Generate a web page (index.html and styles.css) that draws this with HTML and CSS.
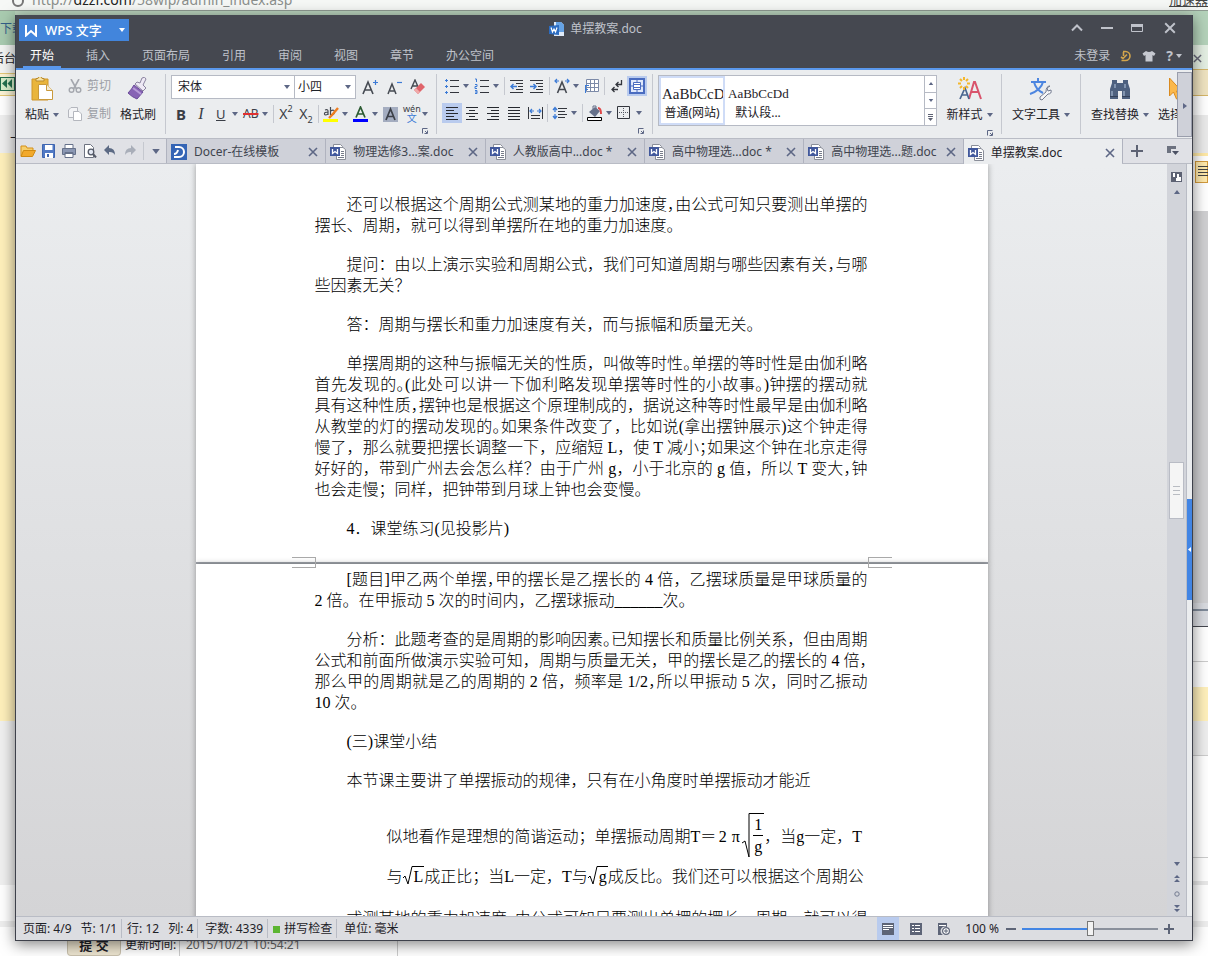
FILE: index.html
```html
<!DOCTYPE html>
<html lang="zh-CN">
<head>
  <meta charset="UTF-8">
  <title>单摆教案.doc</title>
  <link rel="stylesheet" href="styles.css">
</head>
<body>
  <svg class="defs" aria-hidden="true">
    <symbol id="caret" viewBox="0 0 6 4"><path d="M0 0h6L3 4z" fill="currentColor"/></symbol>
    <symbol id="close" viewBox="0 0 10 10"><path d="M1 1l8 8M9 1l-8 8" stroke="currentColor" stroke-width="1.6" fill="none"/></symbol>
    <symbol id="launch" viewBox="0 0 6 6"><path d="M.5 5.500V.5h5M2.500 5.500h3v-3M3 3l2 2" stroke="currentColor" fill="none"/></symbol>
    <symbol id="word" viewBox="0 0 16 16">
      <path d="M3.500.5h7l2 2v9h-9z" fill="#fff" stroke="#8a8e99"/>
      <path d="M8 3.500h5l2.500 2v10H6.500v-4" fill="#fff" stroke="#8a8e99"/>
      <path d="M11 7.500h3M11 9.500h3M11 11.500h3M8 13.500h6" stroke="#777c8a"/>
      <path d="M0 3h10v9H0z" fill="#41589c"/>
      <path d="M2.500 5v4.500L5 7.500l2.500 2V5" fill="none" stroke="#fff" stroke-width="1.300"/>
    </symbol>
  </svg>

  <!-- browser page behind the window -->
  <div class="desktop">
    <div class="address"><span class="globe"></span><span>http://<b>dzzf.com</b>/58wlp/admin_index.asp</span><a href="#" class="speed">加速器</a></div>
    <div class="sides">
      <div class="side-left">
        <a href="#" class="side-link">下载</a>
        <span class="side-name">后台</span>
        <span class="side-rewind"><svg width="12" height="11" viewBox="0 0 12 11"><path d="M6 1v9L1 5.500zM11 1v9L6.500 5.500z" fill="#23704e"/></svg></span>
        <span class="side-up">上</span>
      </div>
      <div class="side-right">
        <svg class="side-close" width="9" height="9"><use href="#close"/></svg>
        <span class="side-align"><svg width="12" height="12" viewBox="0 0 12 12"><path d="M0 1.500h12M0 4.500h12M0 7.500h12M0 10.500h12" stroke="#444"/></svg></span>
      </div>
    </div>
    <div class="form-foot">
      <button class="submit">提 交</button>
      <span class="foot-label">更新时间:</span>
      <span class="foot-time">2015/10/21 10:54:21</span>
    </div>
  </div>

  <div class="window">
    <header class="head">
      <div class="title-row">
        <button class="brand">
          <svg width="12" height="13" viewBox="0 0 12 13"><path d="M1 1v10.500L6 7l5 4.500V1" fill="none" stroke="#fff" stroke-width="2"/></svg>
          <span>WPS 文字</span>
          <svg width="6" height="4"><use href="#caret"/></svg>
        </button>
        <div class="title">
          <svg width="16" height="16" viewBox="0 0 16 16"><path d="M5 1h7l3 3v11H5z" fill="#dfeaf8"/><path d="M7 1h5l3 3v7H7z" fill="#65a2e4"/><path d="M0 5l10-1v10L0 13z" fill="#2c6cc0"/><path d="M2 6.500L3.500 11 5 8l1.500 3L8 6.500" fill="none" stroke="#fff" stroke-width="1.200"/></svg>
          <span>单摆教案.doc</span>
        </div>
        <div class="win-controls">
          <button aria-label="收起"><svg width="12" height="12" viewBox="0 0 12 12"><path d="M1 8.500L6 3.500l5 5" fill="none" stroke="currentColor" stroke-width="2"/></svg></button>
          <button aria-label="最小化"><svg width="12" height="12" viewBox="0 0 12 12"><path d="M0 6h12" stroke="currentColor" stroke-width="2"/></svg></button>
          <button aria-label="最大化"><svg width="12" height="12" viewBox="0 0 12 12"><path d="M.5 2.500h11v7H.5z" fill="none" stroke="currentColor"/><path d="M0 3.500h12" stroke="currentColor" stroke-width="3"/></svg></button>
          <button aria-label="关闭" class="last"><svg width="12" height="12"><use href="#close"/></svg></button>
        </div>
      </div>
      <nav class="menu">
        <button class="on">开始</button>
        <button>插入</button>
        <button>页面布局</button>
        <button>引用</button>
        <button>审阅</button>
        <button>视图</button>
        <button>章节</button>
        <button>办公空间</button>
        <div class="account">
          <a href="#">未登录</a>
          <svg width="12" height="12" viewBox="0 0 12 12"><path d="M3 1.500h2.500a4.500 4.500 0 0 1 0 9H1.500M3.500 2v4M7 4.500L3 8.500 1 7" fill="none" stroke="#d3a54c" stroke-width="1.600"/></svg>
          <svg width="14" height="12" viewBox="0 0 14 12"><path d="M4 1q3 2 6 0l3.500 2.500L12 6l-1.500-1v6.500h-7V5L2 6 .5 3.500z" fill="#c6c9d1"/></svg>
          <button class="help" aria-label="帮助">?<svg width="6" height="4"><use href="#caret"/></svg></button>
        </div>
      </nav>
    </header>

    <div class="ribbon">
      <section class="group clip">
        <button class="big">
          <svg width="24" height="24" viewBox="0 0 24 24"><path d="M2 2h16v21H2z" fill="#e9b53c" stroke="#cf962b"/><path d="M6 4V1.500h2a2 2 0 0 1 4 0h2V4z" fill="#f7e4a8" stroke="#b98b2c"/><path d="M8.500 7.500h8l6 6v9h-14z" fill="#fff" stroke="#c99a3c"/><path d="M16.500 7.500v6h6" fill="#f5ecd4" stroke="#c99a3c"/></svg>
          <span>粘贴 <svg width="6" height="4"><use href="#caret"/></svg></span>
        </button>
        <div class="stack">
          <button class="wide off"><svg width="14" height="14" viewBox="0 0 14 14"><path d="M3 0l5.500 10M11 0L5.500 10" stroke="#a4a7ae" stroke-width="1.600"/><circle cx="3.500" cy="11" r="2.300" fill="none" stroke="#a4a7ae" stroke-width="1.400"/><circle cx="10.500" cy="11" r="2.300" fill="none" stroke="#a4a7ae" stroke-width="1.400"/></svg>剪切</button>
          <button class="wide off"><svg width="14" height="14" viewBox="0 0 14 14"><path d="M3 .5h6.500v10h-9V3z" fill="#f3f4f6" stroke="#b4b7be"/><path d="M7 4.500h4l2.500 2.500v6.500H5.500V4.500z" fill="#fff" stroke="#b4b7be"/></svg>复制</button>
        </div>
        <button class="big">
          <svg width="24" height="24" viewBox="0 0 24 24"><path d="M16 1q3-2 4 1l-3 6 3 3-3 3-8-7 2-2 3 1z" fill="#eee9f5" stroke="#8b84a0"/><path d="M8 8l9 7-6 7Q6 20 2 16q4-4 6-8z" fill="#8763b5" stroke="#6b4c99"/><path d="M7 11l8 6" stroke="#b79bd8" stroke-width="2"/></svg>
          <span>格式刷</span>
        </button>
      </section>

      <section class="group">
        <div class="tools">
          <span class="pick font"><select aria-label="字体"><option>宋体</option></select><svg width="6" height="4"><use href="#caret"/></svg></span>
          <span class="pick size"><select aria-label="字号"><option>小四</option></select><svg width="6" height="4"><use href="#caret"/></svg></span>
          <button class="tool spaced" aria-label="增大字号"><svg width="17" height="16" viewBox="0 0 17 16"><path d="M1 15L6 3l5 12M3 11h6" fill="none" stroke="#454a52" stroke-width="1.600"/><path d="M13.500 1v5M11 3.500h5" stroke="#3c7bd6" stroke-width="1.200"/></svg></button>
          <button class="tool spaced" aria-label="减小字号"><svg width="17" height="16" viewBox="0 0 17 16"><path d="M2 15L6 5l4 10M4 12h5" fill="none" stroke="#454a52" stroke-width="1.500"/><path d="M11 3.500h5" stroke="#3c7bd6" stroke-width="1.200"/></svg></button>
          <button class="tool spaced" aria-label="清除格式"><svg width="16" height="16" viewBox="0 0 16 16"><path d="M1 10l4-9 4 9M2.500 7h5" fill="none" stroke="#454a52" stroke-width="1.400"/><path d="M11 4l4 4-7 7-4-4z" fill="#e0646b"/><path d="M4 11l2-2 4 4-2 2z" fill="#f0a9a9"/></svg></button>
        </div>
        <div class="tools">
          <button class="tool bold">B</button>
          <button class="tool italic">I</button>
          <button class="tool drop under"><span>U</span><svg class="caret" width="6" height="4"><use href="#caret"/></svg></button>
          <button class="tool drop strike"><span>AB</span><svg class="caret" width="6" height="4"><use href="#caret"/></svg></button>
          <i class="bar"></i>
          <button class="tool script">X<sup>2</sup></button>
          <button class="tool script">X<sub>2</sub></button>
          <i class="bar"></i>
          <button class="tool drop" aria-label="突出显示"><svg width="16" height="16" viewBox="0 0 16 16"><path d="M0 13h15v3H0z" fill="#ff0"/><path d="M2 4q3-1 3 1v4M5 6Q1 6 1.500 8T5 8M7.500 1v8M7.500 5q4-2 4 1t-4 2.500" fill="none" stroke="#454a52" stroke-width="1.200"/><path d="M15 2L9 9l-3 3" stroke="#ef7d1f" stroke-width="2.400"/></svg><svg class="caret" width="6" height="4"><use href="#caret"/></svg></button>
          <button class="tool drop" aria-label="字体颜色"><svg width="16" height="16" viewBox="0 0 16 16"><path d="M0 13h15v3H0z" fill="#00f"/><path d="M3 11.500L7.500 1 12 11.500M4.500 8h6" fill="none" stroke="#2d5c34" stroke-width="1.700"/></svg><svg class="caret" width="6" height="4"><use href="#caret"/></svg></button>
          <button class="tool" aria-label="底纹"><svg width="16" height="16" viewBox="0 0 16 16"><path d="M0 1h15v15H0z" fill="#a4adc0"/><path d="M3 14L7.500 3 12 14M4.500 10.500h6" fill="none" stroke="#3c4048" stroke-width="1.700"/></svg></button>
          <button class="tool drop pinyin"><span>wén<b>文</b></span><svg class="caret" width="6" height="4"><use href="#caret"/></svg></button>
        </div>
        <button class="launch" aria-label="字体设置"><svg width="6" height="6"><use href="#launch"/></svg></button>
      </section>

      <section class="group">
        <div class="tools">
          <button class="tool drop" aria-label="项目符号"><svg width="16" height="16" viewBox="0 0 16 16"><path d="M6 2.500h9M6 8.500h9M6 14.500h9" stroke="#33363d" stroke-width="1.200"/><path d="M1 2.500h3M1 8.500h3M1 14.500h3M2.500 1v3M2.500 7v3M2.500 13v3" stroke="#3c7bd6" stroke-width="1"/></svg><svg class="caret" width="6" height="4"><use href="#caret"/></svg></button>
          <button class="tool drop" aria-label="编号"><svg width="16" height="16" viewBox="0 0 16 16"><path d="M6 2.500h9M6 8.500h9M6 14.500h9" stroke="#33363d" stroke-width="1.200"/><path d="M1 1h1.500v3M1 6.500h2v2H1v2h2M1 12.500h2v3H1M1 14h2" stroke="#3c7bd6" fill="none"/></svg><svg class="caret" width="6" height="4"><use href="#caret"/></svg></button>
          <i class="bar"></i>
          <button class="tool" aria-label="减少缩进"><svg width="14" height="14" viewBox="0 0 14 14"><path d="M0 1.500h13M6 4.500h7M8 7.500h5M6 10.500h7M0 13.500h13" stroke="#33363d"/><path d="M7 7.500H1M3.500 5L1 7.500 3.500 10" stroke="#3c7bd6" stroke-width="1.500" fill="none"/></svg></button>
          <button class="tool" aria-label="增加缩进"><svg width="14" height="14" viewBox="0 0 14 14"><path d="M0 1.500h13M6 4.500h7M8 7.500h5M6 10.500h7M0 13.500h13" stroke="#33363d"/><path d="M0 7.500h6M3.500 5L6 7.500 3.500 10" stroke="#3c7bd6" stroke-width="1.500" fill="none"/></svg></button>
          <i class="bar"></i>
          <button class="tool drop" aria-label="中文版式"><svg width="16" height="16" viewBox="0 0 16 16"><path d="M3.500 15L8 4l4.500 11M5 11.500h6" fill="none" stroke="#454a52" stroke-width="1.600"/><path d="M1 3h4M3 1L1 3l2 2M11 3h4M13 1l2 2-2 2" stroke="#3c7bd6" stroke-width="1.200" fill="none"/></svg><svg class="caret" width="6" height="4"><use href="#caret"/></svg></button>
          <button class="tool" aria-label="表格"><svg width="16" height="16" viewBox="0 0 16 16"><path d="M2.500 1.500h12v12h-12zM2.500 5.500h12M2.500 9.500h12M6.500 1.500v12M10.500 1.500v12" fill="#fff" stroke="#7c8aa8"/><path d="M1 7.500h4M1.500 7v8M1 11.500h3" stroke="#3c7bd6" fill="none"/></svg></button>
          <i class="bar"></i>
          <button class="tool" aria-label="换行"><svg width="12" height="14" viewBox="0 0 12 14"><path d="M10.500 1v4.500H5M7.500 3L5 5.500 7.500 8M7 10.500H1M3.500 8L1 10.500 3.500 13" fill="none" stroke="#33363d" stroke-width="1.300"/></svg></button>
          <button class="tool on" aria-label="页面显示"><svg width="16" height="16" viewBox="0 0 16 16"><path d="M1 1h14v14H1z" fill="#dfe8fb" stroke="#4a6cc0" stroke-width="2"/><path d="M4.500 4.500h7v7h-7zM4 6.500h8M4 9.500h8" fill="#fff" stroke="#4a6cc0"/><path d="M8 2v2M8 12v2M2 8h2M12 8h2" stroke="#4a6cc0"/></svg></button>
        </div>
        <div class="tools">
          <button class="tool on" aria-label="左对齐"><svg width="12" height="13" viewBox="0 0 12 13"><path d="M0 .5h12M0 3.500h8M0 6.500h12M0 9.500h8M0 12.500h12" stroke="#26292f"/></svg></button>
          <button class="tool" aria-label="居中"><svg width="12" height="13" viewBox="0 0 12 13"><path d="M0 .5h12M3 3.500h6M0 6.500h12M3 9.500h6M0 12.500h12" stroke="#26292f"/></svg></button>
          <button class="tool next" aria-label="右对齐"><svg width="12" height="13" viewBox="0 0 12 13"><path d="M0 .5h12M4 3.500h8M0 6.500h12M4 9.500h8M0 12.500h12" stroke="#26292f"/></svg></button>
          <button class="tool next" aria-label="两端对齐"><svg width="12" height="13" viewBox="0 0 12 13"><path d="M0 .5h12M0 3.500h12M0 6.500h12M0 9.500h12M0 12.500h12" stroke="#26292f"/></svg></button>
          <button class="tool next" aria-label="分散对齐"><svg width="15" height="12" viewBox="0 0 15 12"><path d="M.5 0v12M14.500 0v12M3 8.500h9M3 11.500h9" stroke="#33363d"/><path d="M2 4h4M4 2L2 4l2 2M9 4h4M11 2l2 2-2 2" stroke="#3c7bd6" stroke-width="1.200" fill="none"/></svg></button>
          <i class="bar"></i>
          <button class="tool drop" aria-label="行距"><svg width="16" height="14" viewBox="0 0 16 14"><path d="M6 2.500h9M6 5.500h7M6 8.500h9M6 11.500h7" stroke="#33363d"/><path d="M3 2v4M1 4l2-2.500L5 4M3 8v4M1 10l2 2.500L5 10" stroke="#3c7bd6" stroke-width="1.300" fill="none"/></svg><svg class="caret" width="6" height="4"><use href="#caret"/></svg></button>
          <i class="bar"></i>
          <button class="tool drop" aria-label="填充"><svg width="16" height="16" viewBox="0 0 16 16"><path d="M2 7l6-5 5 4-5 6z" fill="#66718a"/><path d="M6 4V1h3v3" fill="none" stroke="#66718a"/><path d="M11 3q3 0 3 6" fill="none" stroke="#e04848" stroke-width="2"/><path d="M.5 12.500h14v3H.5z" fill="#fff" stroke="#000"/></svg><svg class="caret" width="6" height="4"><use href="#caret"/></svg></button>
          <button class="tool drop" aria-label="边框"><svg width="14" height="14" viewBox="0 0 14 14"><path d="M.5.5h12v12H.5z" fill="none" stroke="#33363d"/><path d="M6.500 2v10M2 6.500h10" stroke="#555a64" stroke-dasharray="1 1"/></svg><svg class="caret" width="6" height="4"><use href="#caret"/></svg></button>
        </div>
        <button class="launch" aria-label="段落设置"><svg width="6" height="6"><use href="#launch"/></svg></button>
      </section>

      <section class="group styles">
        <div class="gallery">
          <button class="style on"><span class="sample big-sample">AaBbCcDd</span><span>普通(网站)</span></button>
          <button class="style"><span class="sample">AaBbCcDd</span><span>默认段...</span></button>
          <div class="steps">
            <button aria-label="上一行"><svg class="flip" width="6" height="3"><use href="#caret"/></svg></button>
            <button aria-label="下一行"><svg width="6" height="3"><use href="#caret"/></svg></button>
            <button aria-label="更多"><svg width="7" height="7" viewBox="0 0 7 7"><path d="M1 .5h5M1 2.500h5" stroke="#5d6273"/><path d="M1 4h5L3.500 7z" fill="#5d6273"/></svg></button>
          </div>
        </div>
      </section>
      <section class="group new-style">
        <button class="big">
          <svg width="24" height="24" viewBox="0 0 24 24"><path d="M11 22L16 5h1l6 17M13 15h8" fill="none" stroke="#d9536c" stroke-width="2"/><path d="M2 22L7 11l4 11M4 18h6" fill="none" stroke="#4a6690" stroke-width="1.700"/><path d="M6 0v3M6 10v3M0 6.500h3M9 6.500h3M2 2l2 2M10 2L8 4M2 11l2-2M10 11L8 9" stroke="#f4b72c" stroke-width="2"/></svg>
          <span>新样式 <svg width="6" height="4"><use href="#caret"/></svg></span>
        </button>
        <button class="launch" aria-label="样式设置"><svg width="6" height="6"><use href="#launch"/></svg></button>
      </section>
      <section class="group tools-group">
        <button class="big">
          <svg width="24" height="24" viewBox="0 0 24 24"><path d="M9 1v4M2 5h15M5 5q2 8 9 11M14 5Q12 13 1 17" fill="none" stroke="#4d86e0" stroke-width="2"/><path d="M21 9l-3 2 1 3 3-1q1 4-3 4l-6 6q-3 0-2-3l6-5q0-6 4-6z" fill="#f5f6f8" stroke="#737b90"/></svg>
          <span>文字工具 <svg width="6" height="4"><use href="#caret"/></svg></span>
        </button>
      </section>
      <section class="group find">
        <button class="big">
          <svg width="24" height="24" viewBox="0 0 24 24"><path d="M4 3h5v3h6V3h5v3l2 6v10h-8v-8h-4v8H2V12l2-6z" fill="#4e617f"/><path d="M4 14v5M16 14v5M7 7v4M17 7v4" stroke="#93a5c0" stroke-width="1.500"/><path d="M2 19.500h8M14 19.500h8" stroke="#33415a"/></svg>
          <span>查找替换 <svg width="6" height="4"><use href="#caret"/></svg></span>
        </button>
        <button class="big choose">
          <svg width="24" height="24" viewBox="0 0 24 24"><path d="M11.500 1v18l4-4 3 7 3-1.500-3-6.500h5z" fill="#fbb84b" stroke="#d98a1f"/></svg>
          <span>选择</span>
        </button>
      </section>
      <button class="ribbon-next" aria-label="更多工具"><svg width="4" height="6" viewBox="0 0 4 6"><path d="M0 0v6l4-3z" fill="#5f6887"/></svg></button>
    </div>

    <div class="tabbar">
      <div class="quick">
        <button aria-label="打开"><svg width="16" height="14" viewBox="0 0 16 14"><path d="M1 12V2h5l1 2h6v3" fill="#f6cf6d" stroke="#d58f18"/><path d="M3.500 6.500h12l-3 6H1z" fill="#f2a92b" stroke="#d08a12"/></svg></button>
        <button aria-label="保存"><svg width="14" height="14" viewBox="0 0 14 14"><path d="M.5.5h12v13H.5z" fill="#5179c4" stroke="#3f65b0"/><path d="M3 1h7.500v5H3zM3 9h8v5H3z" fill="#fff"/><path d="M5 10h2v3H5z" fill="#3f65b0"/></svg></button>
        <button aria-label="打印"><svg width="14" height="14" viewBox="0 0 14 14"><path d="M3 .5h8v4H3zM3 9.500h8v4H3z" fill="#fff" stroke="#66718a"/><path d="M.5 4.500h13v6H11v-2H3v2H.5z" fill="#8b97b3" stroke="#66718a"/></svg></button>
        <button aria-label="打印预览"><svg width="14" height="14" viewBox="0 0 14 14"><path d="M1.500.5h6l3 3v10h-9z" fill="#fff" stroke="#6d7280"/><circle cx="8" cy="8" r="2.800" fill="#e3e8f3" stroke="#555a68" stroke-width="1.300"/><path d="M10 10l3 3.500" stroke="#555a68" stroke-width="2"/></svg></button>
        <button aria-label="撤消"><svg width="12" height="12" viewBox="0 0 12 12"><path d="M5 0v3q6 0 6 7Q9 6.500 5 7v3L0 5z" fill="#5c6a84"/></svg></button>
        <button aria-label="恢复"><svg width="12" height="12" viewBox="0 0 12 12"><path d="M7 0v3q-6 0-6 7 2-3.500 6-3v3l5-5z" fill="#a9aeb9"/></svg></button>
        <i class="bar"></i>
        <button aria-label="自定义"><svg width="8" height="5"><use href="#caret"/></svg></button>
      </div>
      <div class="tabs">
        <div class="tab"><svg width="16" height="16" viewBox="0 0 16 16"><path d="M0 0h16v16H0z" fill="#3565b5"/><path d="M4 3h4a5 5 0 0 1 0 10H3" fill="none" stroke="#fff" stroke-width="2"/><path d="M3 10q3 0 4-4" fill="none" stroke="#fff" stroke-width="2"/></svg><span>Docer-在线模板</span><button aria-label="关闭"><svg width="10" height="10"><use href="#close"/></svg></button></div>
        <div class="tab"><svg width="16" height="16"><use href="#word"/></svg><span>物理选修3...案.doc</span><button aria-label="关闭"><svg width="10" height="10"><use href="#close"/></svg></button></div>
        <div class="tab"><svg width="16" height="16"><use href="#word"/></svg><span>人教版高中...doc *</span><button aria-label="关闭"><svg width="10" height="10"><use href="#close"/></svg></button></div>
        <div class="tab"><svg width="16" height="16"><use href="#word"/></svg><span>高中物理选...doc *</span><button aria-label="关闭"><svg width="10" height="10"><use href="#close"/></svg></button></div>
        <div class="tab"><svg width="16" height="16"><use href="#word"/></svg><span>高中物理选...题.doc</span><button aria-label="关闭"><svg width="10" height="10"><use href="#close"/></svg></button></div>
        <div class="tab on"><svg width="16" height="16"><use href="#word"/></svg><span>单摆教案.doc</span><button aria-label="关闭"><svg width="10" height="10"><use href="#close"/></svg></button></div>
      </div>
      <div class="tab-end">
        <button aria-label="新建"><svg width="12" height="12" viewBox="0 0 12 12"><path d="M6 0v12M0 6h12" stroke="#5d6273" stroke-width="2"/></svg></button>
        <button aria-label="标签列表"><svg width="12" height="10" viewBox="0 0 12 10"><path d="M0 0h9v3H4v4H0z" fill="#6d7280"/><path d="M5 5h7L8.500 9z" fill="#4c5164"/></svg></button>
      </div>
    </div>

    <div class="work">
      <main class="canvas">
        <article class="page first">
          <p><span class="line full indent">还可以根据这个周期公式测某地的重力加速度<span class="half">，</span>由公式可知只要测出单摆的</span><span class="line">摆长、周期，就可以得到单摆所在地的重力加速度。</span></p>
          <p><span class="line full indent">提问：由以上演示实验和周期公式，我们可知道周期与哪些因素有关<span class="half">，</span>与哪</span><span class="line">些因素无关？</span></p>
          <p><span class="line indent">答：周期与摆长和重力加速度有关，而与振幅和质量无关。</span></p>
          <p><span class="line full indent">单摆周期的这种与振幅无关的性质，叫做等时性<span class="half">。</span>单摆的等时性是由伽利略</span><span class="line full">首先发现的<span class="half">。</span>(此处可以讲一下伽利略发现单摆等时性的小故事。)钟摆的摆动就</span><span class="line full">具有这种性质<span class="half">，</span>摆钟也是根据这个原理制成的，据说这种等时性最早是由伽利略</span><span class="line full">从教堂的灯的摆动发现的<span class="half">。</span>如果条件改变了，比如说(拿出摆钟展示)这个钟走得</span><span class="line full">慢了，那么就要把摆长调整一下，应缩短 L，使 T 减小<span class="half">；</span>如果这个钟在北京走得</span><span class="line full">好好的，带到广州去会怎么样？由于广州 g，小于北京的 g 值，所以 T 变大<span class="half">，</span>钟</span><span class="line">也会走慢；同样，把钟带到月球上钟也会变慢。</span></p>
          <p><span class="line indent">4．课堂练习(见投影片)</span></p>
          <i class="corner left"></i><i class="corner right"></i>
        </article>
        <article class="page second">
          <p><span class="line full indent">[题目]甲乙两个单摆<span class="half">，</span>甲的摆长是乙摆长的 4 倍，乙摆球质量是甲球质量的</span><span class="line">2 倍。在甲振动 5 次的时间内，乙摆球振动______次。</span></p>
          <p><span class="line full indent">分析：此题考查的是周期的影响因素<span class="half">。</span>已知摆长和质量比例关系，但由周期</span><span class="line full">公式和前面所做演示实验可知，周期与质量无关，甲的摆长是乙的摆长的 4 倍<span class="half">，</span></span><span class="line full">那么甲的周期就是乙的周期的 2 倍，频率是 1/2<span class="half">，</span>所以甲振动 5 次，同时乙振动</span><span class="line">10 次。</span></p>
          <p><span class="line indent">(三)课堂小结</span></p>
          <p><span class="line indent">本节课主要讲了单摆振动的规律，只有在小角度时单摆振动才能近</span></p>
          <div class="formula">
            <div class="frow tall"><span>似地看作是理想的简谐运动；单摆振动周期T＝</span><span class="num">2</span><span class="num">π</span><span class="root"><svg width="10" height="46" viewBox="0 0 10 46"><path d="M0 30l3-2 4 16V.5h3" fill="none" stroke="#000"/></svg><span class="frac"><span>1</span><span>g</span></span></span><span>，当g一定，T</span></div>
            <div class="frow"><span>与</span><span class="root"><svg width="10" height="20" viewBox="0 0 10 20"><path d="M0 12l2-2 3 8L9 .5h1" fill="none" stroke="#000"/></svg><span class="rad">L</span></span><span>成正比；当L一定，T与</span><span class="root"><svg width="10" height="20" viewBox="0 0 10 20"><path d="M0 12l2-2 3 8L9 .5h1" fill="none" stroke="#000"/></svg><span class="rad">g</span></span><span>成反比。我们还可以根据这个周期公</span></div>
          </div>
          <p class="cont"><span class="line full indent">式测某地的重力加速度<span class="half">。</span>由公式可知只要测出单摆的摆长、周期，就可以得</span></p>
        </article>
      </main>
      <div class="scroll">
        <button aria-label="选择"><svg width="11" height="10" viewBox="0 0 11 10"><path d="M0 0h11v10H0z" fill="#5d6273"/><path d="M2 1h2v4H2zM6 2h2v3h2v4H5V6h1z" fill="#fff"/></svg></button>
        <button aria-label="向上"><svg class="flip" width="8" height="4"><use href="#caret"/></svg></button>
        <div class="track"><div class="thumb"><svg width="7" height="9" viewBox="0 0 7 9"><path d="M0 .5h7M0 4.500h7M0 8.500h7" stroke="#b9bcc2"/></svg></div></div>
        <button aria-label="向下"><svg width="8" height="4"><use href="#caret"/></svg></button>
        <button aria-label="上一页"><svg width="6" height="8" viewBox="0 0 6 8"><path d="M3 0l3 3H0zM3 4l3 3H0z" fill="#5d6785"/></svg></button>
        <button aria-label="选择浏览对象"><svg width="6" height="6" viewBox="0 0 6 6"><circle cx="3" cy="3" r="2.200" fill="none" stroke="#737b90"/></svg></button>
        <button aria-label="下一页"><svg width="6" height="8" viewBox="0 0 6 8"><path d="M3 3l3-3H0zM3 7l3-3H0z" fill="#5d6785"/></svg></button>
      </div>
      <div class="drawer"><button aria-label="展开侧栏"><svg width="3" height="5" viewBox="0 0 3 5"><path d="M3 0v5L0 2.500z" fill="#fff"/></svg></button></div>
    </div>

    <footer class="status">
      <span class="cell"><span>页面: 4/9</span><span>节: 1/1</span></span>
      <span class="cell"><span>行: 12</span><span>列: 4</span></span>
      <span class="cell count">字数: 4339</span>
      <span class="cell spell"><i></i>拼写检查</span>
      <span class="cell unit">单位: 毫米</span>
      <div class="zoom">
        <button class="view on" aria-label="页面视图"><svg width="12" height="12" viewBox="0 0 12 12"><path d="M0 0h12v12H0z" fill="#5d6477"/><path d="M1 2.500h10M1 4.500h10M1 6.500h6" stroke="#fff"/></svg></button>
        <button class="view" aria-label="大纲视图"><svg width="12" height="12" viewBox="0 0 12 12"><path d="M0 0h12v12H0z" fill="#5d6477"/><path d="M2 2.500h2M5 2.500h5M2 5.500h2M5 5.500h5M2 8.500h2M5 8.500h5" stroke="#fff"/></svg></button>
        <button class="view" aria-label="网页视图"><svg width="12" height="12" viewBox="0 0 12 12"><path d="M0 0h9v4a4 4 0 0 0-4 8H0z" fill="#5d6477"/><path d="M1 2.500h7" stroke="#fff"/><circle cx="8" cy="8" r="3.400" fill="#fff" stroke="#5d6477" stroke-width="1.200"/><path d="M8 6v4M6 8h4" stroke="#5d6477"/></svg></button>
        <label for="zoom">100 %</label>
        <button aria-label="缩小"><svg width="10" height="10" viewBox="0 0 10 10"><path d="M0 5h10" stroke="#5d6477" stroke-width="2"/></svg></button>
        <input id="zoom" type="range" min="0" max="200" value="100">
        <button aria-label="放大"><svg width="10" height="10" viewBox="0 0 10 10"><path d="M0 5h10M5 0v10" stroke="#5d6477" stroke-width="2"/></svg></button>
      </div>
    </footer>
  </div>
</body>
</html>
```
FILE: styles.css
```css
html, body {
  height: 100%;
}

body {
  margin: 0;
  position: relative;
  overflow: hidden;
  font-family: "Noto Sans", "Noto Sans CJK SC", sans-serif;
  font-size: 12px;
  line-height: 18px;
  color: #1e2228;
}

* {
  box-sizing: border-box;
}

button, select, input {
  font: inherit;
  color: inherit;
  padding: 0;
  margin: 0;
  border: 0;
  background: none;
}

svg {
  flex: none;
}

.defs {
  position: absolute;
  width: 0;
  height: 0;
}

.flip {
  transform: scaleY(-1);
}

/* page behind */
.desktop {
  height: 100%;
  display: flex;
  flex-direction: column;
  background: #fff;
}

.address {
  flex: none;
  height: 11px;
  display: flex;
  align-items: flex-end;
  gap: 8px;
  padding: 0 0 3px 12px;
  overflow: hidden;
  background: #f6f8f6;
  border-bottom: 1px solid #8f9b92;
  color: #8b8f8c;
  font-size: 14px;
  line-height: 14px;
}

.address b {
  color: #222;
  font-weight: normal;
}

.globe {
  width: 12px;
  height: 12px;
  border: 2px solid #777;
  border-radius: 50%;
}

.speed {
  margin-left: auto;
  font-size: 13px;
  color: #444;
}

.sides {
  flex: 1;
  display: flex;
  justify-content: space-between;
  background: #b9d3bd;
}

.side-left, .side-right {
  width: 15px;
  overflow: hidden;
  display: flex;
  flex-direction: column;
}

.side-left {
  background: linear-gradient(#a9cbb0 34px, #f4f5f3 34px 62px, #e3c878 62px 63px, #fbf3d5 63px 84px, #e3c878 84px 85px, #fff 85px 104px, #efefef 104px 142px, #fff0bb 142px 710px, #f0f0f0 710px 874px, #fff 874px 910px, #eee 910px 916px, #fff 916px);
}

.side-link {
  margin-top: 9px;
  color: #33608a;
  text-decoration: none;
  white-space: nowrap;
}

.side-name {
  margin: 12px 0 0 -8px;
  white-space: nowrap;
}

.side-rewind {
  height: 14px;
  margin-top: 9px;
  line-height: 11px;
  background: #d7eecb;
  border: 1px solid #23704e;
}

.side-up {
  margin-top: 32px;
  padding-left: 10px;
  font-size: 14px;
}

.side-right {
  background: linear-gradient(#b4d2ba 34px, #e4efe3 34px 58px, #d5b566 58px 59px, #efe3c0 59px 84px, #d5b566 84px 85px, #fff 85px 104px, #eaeaea 104px 142px, #ffe9a6 142px 145px, #fff 145px 200px, #d0d0d2 200px 592px, #d9dbe0 592px 598px, #7f8a99 598px 600px, #d9dbe0 600px 615px, #45474f 615px 616px, #fff 616px 650px, #ccc 650px 651px, #fff 651px 676px, #fff0bb 676px 710px, #eee 710px 744px, #ccc 744px 745px, #fff 745px 846px, #ccc 846px 847px, #fff 847px 870px, #e8e8e8 870px 874px, #fff 874px 910px, #eee 910px 916px, #fff 916px);
}

.side-close {
  margin: 43px 0 0 0;
  color: #667;
}

.side-align {
  height: 22px;
  margin: 98px 0 0 2px;
  padding: 2px;
  border: 1px solid #d29a3c;
  background: #ffe9ac;
}

.form-foot {
  height: 24px;
  padding-left: 67px;
  display: flex;
  align-items: flex-start;
  line-height: 26px;
}

.submit {
  width: 54px;
  height: 24px;
  border: 1px solid #c9c1ad;
  border-top: 0;
  border-radius: 0 0 4px 4px;
  background: #ece4cf;
  font-weight: bold;
  font-size: 13px;
}

.foot-label {
  width: 59px;
  padding-left: 4px;
  border-right: 1px solid #ccc;
  white-space: nowrap;
}

.foot-time {
  width: 218px;
  padding-left: 6px;
  border-right: 1px solid #ccc;
  color: #666;
}

/* window */
.window {
  position: absolute;
  inset: 15px;
  display: flex;
  flex-direction: column;
  border: 1px solid #3e414b;
  border-top: 0;
  background: #ebedef;
  box-shadow: 0 3px 14px rgba(0, 0, 0, 0.5);
}

.head {
  background: #454850;
  border-bottom: 2px solid #5a98ec;
  color: #bfc2ca;
}

.title-row {
  display: flex;
  height: 26px;
  padding: 4px 0 0 3px;
}

.brand {
  display: flex;
  align-items: center;
  gap: 8px;
  width: 110px;
  height: 22px;
  padding-left: 6px;
  background: #4285dc;
  color: #fff;
  font-size: 13px;
  font-weight: 500;
}

.brand span {
  flex: 1;
  text-align: left;
  white-space: nowrap;
}

.brand svg:last-child {
  margin-right: 4px;
}

.title {
  flex: 1;
  display: flex;
  justify-content: center;
  align-items: center;
  gap: 5px;
  padding-bottom: 2px;
}

.win-controls {
  display: flex;
  padding: 0 4px 4px 0;
}

.win-controls button {
  width: 30px;
  display: flex;
  align-items: center;
  justify-content: center;
}

.win-controls .last {
  width: 36px;
}

.menu {
  display: flex;
  gap: 18px;
  height: 27px;
  padding-left: 7px;
}

.menu > button {
  padding: 4px 7px 0;
  border-bottom: 2px solid transparent;
}

.menu > .on {
  color: #fff;
  border-color: #5a98ec;
}

.account {
  margin-left: auto;
  padding: 3px 10px 0 0;
  display: flex;
  align-items: center;
  gap: 10px;
}

.account a {
  color: inherit;
  text-decoration: none;
}

.help {
  display: flex;
  align-items: center;
  gap: 3px;
  font-size: 14px;
  font-weight: bold;
}

/* ribbon */
.ribbon {
  display: flex;
  height: 69px;
  padding: 4px 0 4px 0;
  border-bottom: 1px solid #b9bcc5;
  overflow: hidden;
  position: relative;
}

.ribbon svg, .tabbar svg, .scroll svg {
  color: #5d6785;
}

.group {
  display: flex;
  flex-direction: column;
  flex: none;
  gap: 6px;
  padding: 1px 5px 0;
  border-right: 1px solid #c5c8cf;
}

.clip {
  flex-direction: row;
  gap: 8px;
  width: 150px;
  padding: 1px 0 0 9px;
}

.big {
  display: flex;
  flex-direction: column;
  align-items: center;
  gap: 5px;
  height: 50px;
  padding-top: 2px;
  white-space: nowrap;
}

.big span {
  display: flex;
  align-items: center;
  gap: 4px;
}

.stack {
  display: flex;
  flex-direction: column;
  gap: 6px;
}

.wide {
  display: flex;
  align-items: center;
  gap: 5px;
  height: 22px;
  padding: 0 1px;
}

.off {
  color: #9b9ea5;
}

.tools {
  display: flex;
  align-items: center;
  height: 23px;
}

.tool {
  width: 20px;
  height: 20px;
  display: flex;
  align-items: center;
  justify-content: center;
  color: #3a3e46;
}

.tool.on {
  background: #b9cbee;
}

.tool.next {
  margin-left: 1px;
}

.tool.drop {
  width: 30px;
  justify-content: space-between;
  padding: 0 3px 0 2px;
}

.tool.spaced {
  margin-left: 4px;
}

.bold {
  font-size: 15px;
  font-weight: bold;
}

.italic {
  font: italic 16px "Liberation Serif", serif;
}

.under span {
  padding-left: 3px;
  font-size: 13px;
  text-decoration: underline;
}

.strike span {
  text-decoration: line-through #e03030 2px;
}

.script {
  font-size: 14px;
}

.script sup, .script sub {
  font-size: 9px;
  line-height: 9px;
}

.script sup {
  align-self: flex-start;
}

.script sub {
  align-self: flex-end;
}

.pinyin span {
  font-size: 9px;
  line-height: 8px;
}

.pinyin b {
  display: block;
  font-size: 10px;
  line-height: 11px;
  font-weight: normal;
  color: #3c7bd6;
}

.bar {
  width: 1px;
  height: 18px;
  margin: 0 2px;
  background: #c5c8cf;
}

.launch {
  height: 6px;
  align-self: flex-end;
  margin-right: 3px;
  line-height: 6px;
  display: flex;
}

.tools + .launch {
  margin-top: -2px;
}

.pick {
  display: flex;
  align-items: center;
  height: 24px;
  padding-right: 4px;
  border: 1px solid #b6bac4;
  background: #fff;
}

.pick select {
  flex: 1;
  height: 22px;
  padding-left: 6px;
  appearance: none;
}

.font {
  width: 124px;
}

.size {
  width: 61px;
  border-left: 0;
}

.size select {
  padding-left: 3px;
}

.styles {
  padding-right: 3px;
  border-right: 0;
}

.gallery {
  display: flex;
  width: 279px;
  height: 51px;
  border: 1px solid #b6bac4;
  background: #fff;
}

.style {
  width: 66px;
  padding: 6px 1px 0;
  border: 2px solid transparent;
  overflow: hidden;
  display: flex;
  flex-direction: column;
  align-items: center;
  white-space: nowrap;
}

.style.on {
  border-color: #cfdcf7;
}

.sample {
  align-self: flex-start;
  font: 13px/20px "Liberation Serif", serif;
}

.big-sample {
  font-size: 15px;
}

.steps {
  width: 12px;
  margin-left: auto;
  display: flex;
  flex-direction: column;
  border-left: 1px solid #b6bac4;
}

.steps button {
  flex: 1;
  display: flex;
  align-items: center;
  justify-content: center;
}

.steps button + button {
  border-top: 1px solid #b6bac4;
}

.new-style {
  width: 62px;
  padding: 1px 5px 0 3px;
}

.tools-group {
  width: 79px;
  padding: 1px 10px 0;
}

.find {
  flex-direction: row;
  gap: 9px;
  padding-left: 10px;
  border-right: 0;
}

.ribbon-next {
  position: absolute;
  top: 2px;
  right: 0;
  width: 15px;
  height: 65px;
  border: 1px solid #9a9eac;
  background: #cfd1d9;
}

/* document tabs */
.tabbar {
  display: flex;
  height: 25px;
  background: #e0e1e6;
  border-bottom: 1px solid #b9bcc5;
}

.quick {
  flex: none;
  display: flex;
  align-items: center;
  width: 150px;
  padding-left: 2px;
}

.quick button {
  width: 21px;
  display: flex;
  justify-content: center;
}

.tabs {
  flex: 1;
  display: flex;
  min-width: 0;
}

.tab {
  flex: 1;
  min-width: 0;
  display: flex;
  align-items: center;
  gap: 7px;
  padding: 2px 7px 0 4px;
  border-left: 1px solid #b0b3bf;
  background: #cfd1d9;
  color: #40444e;
}

.tab span {
  flex: 1;
  white-space: nowrap;
  overflow: hidden;
}

.tab button {
  display: flex;
}

.tab.on {
  height: 25px;
  background: #ebedef;
  color: #1e2228;
}

.tab-end {
  width: 70px;
  display: flex;
  align-items: center;
  justify-content: space-between;
  padding: 0 13px 0 8px;
  border-left: 1px solid #b0b3bf;
}

.tab-end button {
  display: flex;
}

/* document */
.work {
  flex: 1;
  min-height: 0;
  display: flex;
  background: linear-gradient(#ebedef, #d4d4d6);
}

.canvas {
  flex: 1;
  min-width: 0;
  overflow: hidden;
}

.page {
  position: relative;
  max-width: 792px;
  margin: 0 auto;
  padding: 0 120px 0 119px;
  background: #fff;
  box-shadow: 0 0 6px rgba(0, 0, 0, 0.35);
  color: #000;
  font-family: "Liberation Serif", "Noto Sans CJK SC", serif;
  font-size: 16px;
  font-weight: 300;
  line-height: 21px;
}

.first {
  padding-top: 30px;
  padding-bottom: 5px;
  border-bottom: 2px solid #a0a4ab;
}

.second {
  padding-top: 5px;
}

.page p {
  margin: 0 0 18px;
}

.line {
  display: block;
  white-space: nowrap;
}

.indent {
  padding-left: 32px;
}

.full {
  text-align: justify;
  text-align-last: justify;
}

/* half-width punctuation mark */
.half {
  font-feature-settings: "halt";
}

.corner {
  position: absolute;
  z-index: 1;
  bottom: -6px;
  width: 24px;
  height: 11px;
  border: 1px solid #a9a9a9;
}

.corner.left {
  left: 96px;
  border-left: 0;
}

.corner.right {
  right: 96px;
  border-right: 0;
}

.formula {
  padding: 4px 0 0 72px;
}

.frow {
  display: flex;
  align-items: center;
  height: 32px;
  white-space: nowrap;
}

.frow.tall {
  height: 46px;
  margin-bottom: 1px;
}

.num {
  width: 13px;
  text-align: center;
}

.root {
  display: flex;
  align-items: flex-start;
}

.frac {
  display: flex;
  flex-direction: column;
  align-items: center;
  width: 12px;
  border-top: 1px solid #000;
}

.frac span + span {
  width: 10px;
  text-align: center;
  border-top: 1px solid #000;
}

.rad {
  border-top: 1px solid #000;
  line-height: 19px;
  padding: 0 1px;
}

.cont {
  padding-top: 16px;
}

.scroll {
  width: 20px;
  display: flex;
  flex-direction: column;
  align-items: center;
  padding-top: 5px;
  background: #d2d4da;
  border-right: 1px solid #b9bcc5;
}

.scroll button {
  height: 15px;
  display: flex;
  align-items: center;
}

.track {
  flex: 1;
  display: flex;
  flex-direction: column;
  padding-top: 263px;
}

.thumb {
  width: 15px;
  height: 57px;
  display: flex;
  align-items: center;
  justify-content: center;
  border: 1px solid #b9bcc5;
  background: #f5f5f5;
}

.drawer {
  width: 5px;
  display: flex;
  align-items: center;
  background: #ebedef;
}

.drawer button {
  width: 5px;
  height: 101px;
  margin-top: 18px;
  display: flex;
  align-items: center;
  justify-content: center;
  background: #4285e4;
}

/* status bar */
.status {
  flex: none;
  height: 24px;
  display: flex;
  align-items: center;
  border-top: 1px solid #b9bcc5;
  background: #dcdde1;
  white-space: nowrap;
}

.cell {
  display: flex;
  align-items: center;
  gap: 9px;
  padding: 1px 4px 0 5px;
  border-right: 1px solid #b9bcc5;
}

.cell:first-child, .count, .unit {
  padding-left: 7px;
}

.spell {
  gap: 4px;
}

.spell i {
  width: 7px;
  height: 7px;
  background: #5cb531;
}

.unit {
  border-right: 0;
}

.zoom {
  margin-left: auto;
  padding-right: 18px;
  display: flex;
  align-items: center;
  gap: 6px;
  height: 100%;
}

.zoom button {
  display: flex;
  align-items: center;
  justify-content: center;
}

.view {
  width: 22px;
  height: 100%;
}

.view.on {
  background: #b9cbee;
}

.zoom label {
  padding: 0 1px 0 4px;
}

.zoom input {
  appearance: none;
  width: 136px;
  height: 15px;
  background: linear-gradient(90deg, #4285e4 50%, #8a909c 50%) center / 100% 2px no-repeat;
}

.zoom input::-webkit-slider-thumb {
  appearance: none;
  width: 7px;
  height: 15px;
  border: 1px solid #777;
  background: #f3f3f3;
}
```
